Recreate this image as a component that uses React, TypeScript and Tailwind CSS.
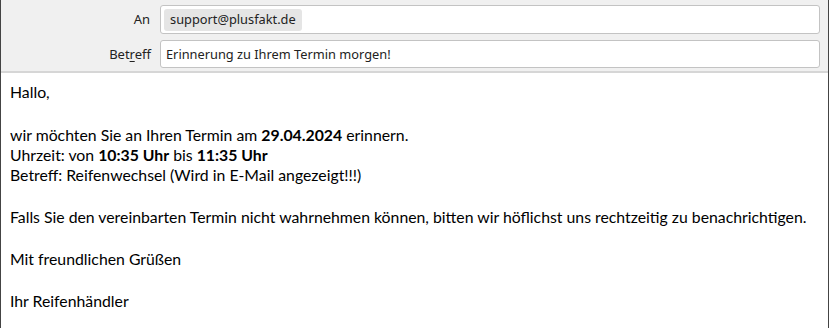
import React from "react";

export default function App() {
  return (
    <div className="w-[829px] h-[328px] bg-white border-x border-[#444444] flex flex-col overflow-hidden">
      <div className="bg-[#f0f0f0] border-b-2 border-[#d6d6d6] h-[73px] flex flex-col pt-[5px] pr-[8px] gap-[6px] font-['Noto_Sans',sans-serif] text-[12.8px] text-[#222]">
        <div className="flex items-center h-[29px]">
          <div className="w-[150px] pr-[1px] text-right leading-none text-[13px]">An</div>
          <div className="ml-[9px] flex-1 h-[29px] bg-white border border-[#c3c3c3] rounded-[3px] flex items-center px-[3px]">
            <span className="bg-[#e5e5e5] rounded-[3px] h-[22px] flex items-center px-[6px] leading-none">support@plusfakt.de</span>
          </div>
        </div>
        <div className="flex items-center h-[28px]">
          <div className="w-[150px] text-right leading-none text-[13px]">
            Bet<span className="underline underline-offset-2">r</span>eff
          </div>
          <div className="ml-[9px] flex-1 h-[28px] bg-white border border-[#c3c3c3] rounded-[3px] flex items-center px-[5px] leading-none">
            Erinnerung zu Ihrem Termin morgen!
          </div>
        </div>
      </div>
      <div className="px-[9px] pt-[9px] font-['Lato',sans-serif] text-[15.8px] leading-[20px] text-black">
        <p>Hallo,</p>
        <p className="mt-[23px]">
          wir möchten Sie an Ihren Termin am <b>29.04.2024</b> erinnern.
        </p>
        <p>
          Uhrzeit: von <b>10:35 Uhr</b> bis <b>11:35 Uhr</b>
        </p>
        <p>Betreff: Reifenwechsel (Wird in E-Mail angezeigt!!!)</p>
        <p className="mt-[22px]">
          Falls Sie den vereinbarten Termin nicht wahrnehmen können, bitten wir höflichst uns rechtzeitig zu benachrichtigen.
        </p>
        <p className="mt-[22px]">Mit freundlichen Grüßen</p>
        <p className="mt-[22px]">Ihr Reifenhändler</p>
      </div>
    </div>
  );
}
